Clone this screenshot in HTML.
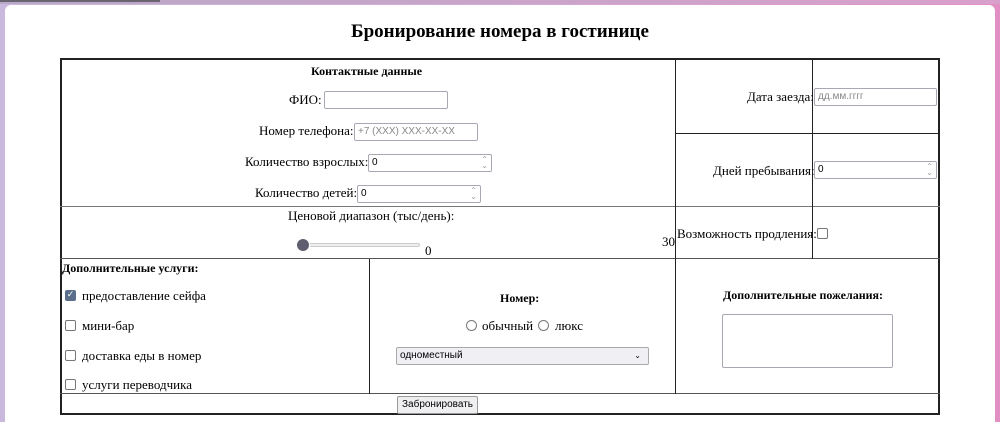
<!DOCTYPE html>
<html><head><meta charset="utf-8"><style>
*{box-sizing:border-box;margin:0;padding:0}
html,body{width:1000px;height:422px;overflow:hidden}
body{background:linear-gradient(90deg,#c9b9dc,#d8a8d0 60%,#e290c4);position:relative;font-family:"Liberation Serif","DejaVu Serif",serif;font-size:13px;color:#000}
.top{position:absolute;left:0;top:0;width:1000px;height:4px;background:linear-gradient(90deg,#b9a8c8,#d9a0cc)}
.top2{position:absolute;left:0;top:0;width:160px;height:2px;background:#6a6470}
.card{position:absolute;left:5px;top:5px;width:990px;height:417px;background:#fff;border-radius:6px 6px 0 0}
.a{position:absolute;white-space:nowrap}
.h{position:absolute;background:#222}
.in{position:absolute;border:1px solid #aaa7b5;border-radius:2px;background:#fff;font-family:"Liberation Sans","DejaVu Sans",sans-serif;font-size:10px;padding:0 3px;color:#000;height:18px;line-height:16px}
.ph{color:#888}
.sp{position:absolute;right:3px;top:2px;color:#999;font-size:8px;line-height:6px;text-align:center}
.cb{position:absolute;width:11px;height:11px;border:1px solid #777;border-radius:2px;background:#fff}
.rd{position:absolute;width:11px;height:11px;border:1px solid #777;border-radius:50%;background:#fff}
</style></head><body>
<div class="top"></div><div class="top2"></div>
<div class="card"></div>
<div class="a" style="left:0;width:1000px;text-align:center;top:21px;font-size:19px;font-weight:bold">Бронирование номера в гостинице</div>

<div class="h" style="left:60px;top:58px;width:880px;height:2px"></div>
<div class="h" style="left:60px;top:58px;width:2px;height:357px"></div>
<div class="h" style="left:938px;top:58px;width:2px;height:357px"></div>
<div class="h" style="left:60px;top:413px;width:880px;height:2px"></div>
<div class="h" style="left:60px;top:206px;width:880px;height:1px;background:#777"></div>
<div class="h" style="left:60px;top:258px;width:880px;height:1px;background:#555"></div>
<div class="h" style="left:60px;top:393px;width:880px;height:1px;background:#555"></div>
<div class="h" style="left:675px;top:59px;width:1px;height:335px"></div>
<div class="h" style="left:812px;top:59px;width:1px;height:200px"></div>
<div class="h" style="left:676px;top:133px;width:263px;height:1px"></div>
<div class="h" style="left:369px;top:259px;width:1px;height:135px"></div>

<div class="a" style="left:311px;top:64px;font-weight:bold;font-size:12px">Контактные данные</div>
<div class="a" style="left:289px;top:92px">ФИО:</div>
<div class="in" style="left:324px;top:91px;width:124px"></div>
<div class="a" style="left:259px;top:123px">Номер телефона:</div>
<div class="in ph" style="left:354px;top:123px;width:124px">+7 (XXX) XXX-XX-XX</div>
<div class="a" style="left:245px;top:154px">Количество взрослых:</div>
<div class="in" style="left:368px;top:154px;width:124px">0<span class="sp">⌃<br>⌄</span></div>
<div class="a" style="left:255px;top:185px">Количество детей:</div>
<div class="in" style="left:357px;top:185px;width:124px">0<span class="sp">⌃<br>⌄</span></div>

<div class="a" style="left:747px;top:89px">Дата заезда:</div>
<div class="in ph" style="left:814px;top:88px;width:123px">дд.мм.гггг</div>
<div class="a" style="left:713px;top:163px">Дней пребывания:</div>
<div class="in" style="left:814px;top:161px;width:123px">0<span class="sp">⌃<br>⌄</span></div>

<div class="a" style="left:288px;top:208px">Ценовой диапазон (тыс/день):</div>
<div class="a" style="left:298px;top:243px;width:122px;height:4px;border-radius:2px;background:#eee;border:1px solid #ccc"></div>
<div class="a" style="left:296px;top:238px;width:14px;height:14px;border-radius:50%;background:#5f5e70;border:1px solid #fff"></div>
<div class="a" style="left:425px;top:243px">0</div>
<div class="a" style="left:662px;top:234px">30</div>
<div class="a" style="left:677px;top:226px">Возможность продления:</div>
<div class="cb" style="left:817px;top:228px"></div>

<div class="a" style="left:62px;top:261px;font-weight:bold;font-size:12px">Дополнительные услуги:</div>
<div class="cb" style="left:65px;top:290px;background:#5a6e8a;border-color:#5a6e8a;color:#fff;font-size:9px;line-height:9px;text-align:center;font-family:'DejaVu Sans'">✓</div>
<div class="a" style="left:82px;top:288px">предоставление сейфа</div>
<div class="cb" style="left:65px;top:320px"></div>
<div class="a" style="left:82px;top:318px">мини-бар</div>
<div class="cb" style="left:65px;top:350px"></div>
<div class="a" style="left:82px;top:348px">доставка еды в номер</div>
<div class="cb" style="left:65px;top:379px"></div>
<div class="a" style="left:82px;top:377px">услуги переводчика</div>

<div class="a" style="left:500px;top:291px;font-weight:bold;font-size:12px">Номер:</div>
<div class="rd" style="left:466px;top:320px"></div>
<div class="a" style="left:482px;top:318px">обычный</div>
<div class="rd" style="left:538px;top:320px"></div>
<div class="a" style="left:555px;top:318px">люкс</div>
<div class="in" style="left:396px;top:347px;width:253px;background:#f0eff4;border-color:#aaa">одноместный<span style="position:absolute;right:7px;top:0;font-size:8px">⌄</span></div>

<div class="a" style="left:723px;top:288px;font-weight:bold;font-size:12px">Дополнительные пожелания:</div>
<div class="in" style="left:722px;top:314px;width:171px;height:54px"></div>

<div class="in" style="left:397px;top:396px;width:81px;height:18px;background:#efeff2;border-color:#999;text-align:center;padding:0">Забронировать</div>
</body></html>
